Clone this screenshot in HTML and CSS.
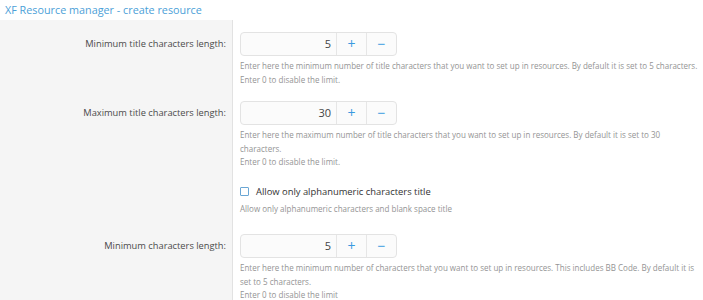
FILE: index.html
```html
<!DOCTYPE html>
<html>
<head>
<meta charset="utf-8">
<link rel="stylesheet" href="styles.css">
</head>
<body>
<div class="header">XF Resource manager - create resource</div>
<div class="form">
  <div class="row">
    <div class="label">Minimum title characters length:</div>
    <div class="field">
      <div class="spin">
        <div class="spin-value">5</div>
        <div class="spin-btn plus">+</div>
        <div class="spin-btn minus">−</div>
      </div>
      <div class="help">Enter here the minimum number of title characters that you want to set up in resources. By default it is set to 5 characters.<br>Enter 0 to disable the limit.</div>
    </div>
  </div>
  <div class="row">
    <div class="label">Maximum title characters length:</div>
    <div class="field">
      <div class="spin">
        <div class="spin-value">30</div>
        <div class="spin-btn plus">+</div>
        <div class="spin-btn minus">−</div>
      </div>
      <div class="help">Enter here the maximum number of title characters that you want to set up in resources. By default it is set to 30 characters.<br>Enter 0 to disable the limit.</div>
    </div>
  </div>
  <div class="row">
    <div class="label"></div>
    <div class="field check-field">
      <label class="check"><span class="box"></span><span class="check-text">Allow only alphanumeric characters title</span></label>
      <div class="help check-help">Allow only alphanumeric characters and blank space title</div>
    </div>
  </div>
  <div class="row">
    <div class="label">Minimum characters length:</div>
    <div class="field">
      <div class="spin">
        <div class="spin-value">5</div>
        <div class="spin-btn plus">+</div>
        <div class="spin-btn minus">−</div>
      </div>
      <div class="help">Enter here the minimum number of characters that you want to set up in resources. This includes BB Code. By default it is set to 5 characters.<br>Enter 0 to disable the limit</div>
    </div>
  </div>
</div>
</body>
</html>
```
FILE: styles.css
```css
html, body {
  margin: 0;
  padding: 0;
  background: #fff;
  font-family: "Open Sans", "Noto Sans", sans-serif;
  overflow: hidden;
}
.header {
  height: 20px;
  box-sizing: border-box;
  padding: 2px 0 0 5px;
  font-size: 10.8px;
  line-height: 16px;
  color: #4c9fd8;
}
.form {
  display: flex;
  flex-direction: column;
}
.row {
  display: grid;
  grid-template-columns: 233px 1fr;
}
.label {
  background: #f5f5f5;
  border-right: 1px solid #e2e2e2;
  text-align: right;
  padding: 16px 6px 0 0;
  font-size: 9.3px;
  line-height: 16px;
  color: #4b4b4b;
}
.field {
  padding: 12px 0 3px 7px;
}
.spin {
  display: flex;
  width: 157px;
  height: 24px;
  box-sizing: border-box;
  border: 1px solid #e3e3e3;
  border-radius: 4px;
  background: #fbfbfb;
}
.spin-value {
  flex: 1;
  text-align: right;
  padding-right: 5px;
  font-size: 11px;
  line-height: 22px;
  color: #444;
}
.spin-btn {
  width: 29px;
  border-left: 1px solid #e6e6e6;
  text-align: center;
  font-size: 14px;
  line-height: 21px;
  color: #3a9ae0;
}
.help {
  margin-top: 3px;
  font-size: 8.02px;
  line-height: 13.5px;
  color: #949494;
}
.check-field {
  padding-top: 12px;
  padding-bottom: 7px;
}
.check {
  display: flex;
  align-items: center;
  height: 16px;
}
.box {
  width: 7px;
  height: 7px;
  border: 1px solid #6aa6d4;
  border-radius: 1px;
  margin-right: 7px;
}
.check-text {
  font-size: 9.4px;
  color: #333;
}
.check-help {
  margin-top: 2px;
}
```
